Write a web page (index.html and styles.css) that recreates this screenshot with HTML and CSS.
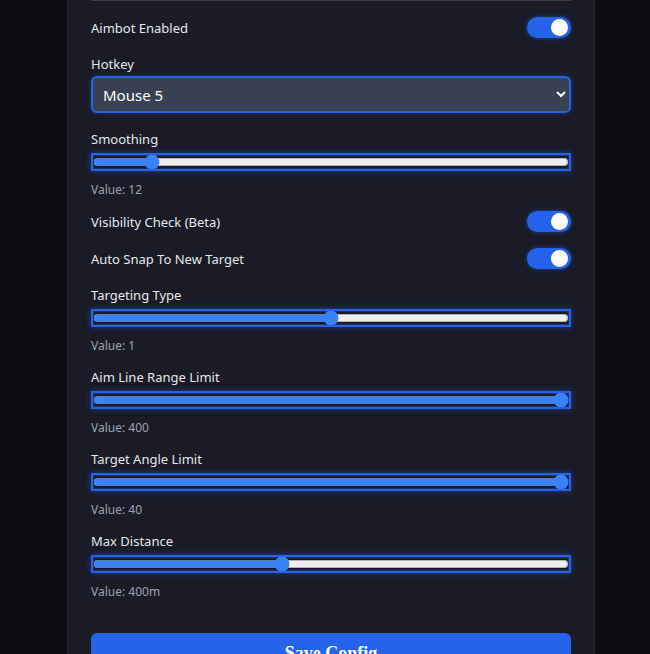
FILE: index.html
```html
<!DOCTYPE html>
<html lang="en">
<head>
    <meta charset="UTF-8">
    <meta name="viewport" content="width=device-width, initial-scale=1.0">
    <title>Aimbot Config</title>
    <link rel="stylesheet" href="styles.css">
</head>
<body>
    <div class="panel">
        <div class="panel-head">Aimbot Settings</div>

        <div class="setting toggle-row">
            <span class="label">Aimbot Enabled</span>
            <label class="switch"><input type="checkbox" checked><span class="knob"></span></label>
        </div>

        <div class="setting">
            <label class="label" for="hotkey">Hotkey</label>
            <select id="hotkey">
                <option>Mouse 4</option>
                <option selected>Mouse 5</option>
                <option>Left Alt</option>
                <option>Left Shift</option>
            </select>
        </div>

        <div class="setting slider">
            <label class="label" for="smoothing">Smoothing</label>
            <input type="range" id="smoothing" min="1" max="100" value="12">
            <div class="value">Value: 12</div>
        </div>

        <div class="setting toggle-row">
            <span class="label">Visibility Check (Beta)</span>
            <label class="switch"><input type="checkbox" checked><span class="knob"></span></label>
        </div>

        <div class="setting toggle-row">
            <span class="label">Auto Snap To New Target</span>
            <label class="switch"><input type="checkbox" checked><span class="knob"></span></label>
        </div>

        <div class="setting slider">
            <label class="label" for="targeting">Targeting Type</label>
            <input type="range" id="targeting" min="0" max="2" value="1">
            <div class="value">Value: 1</div>
        </div>

        <div class="setting slider">
            <label class="label" for="aimline">Aim Line Range Limit</label>
            <input type="range" id="aimline" min="0" max="400" value="400">
            <div class="value">Value: 400</div>
        </div>

        <div class="setting slider">
            <label class="label" for="angle">Target Angle Limit</label>
            <input type="range" id="angle" min="0" max="40" value="40">
            <div class="value">Value: 40</div>
        </div>

        <div class="setting slider">
            <label class="label" for="distance">Max Distance</label>
            <input type="range" id="distance" min="10" max="1000" value="400">
            <div class="value">Value: 400m</div>
        </div>

        <button class="save">Save Config</button>
    </div>
</body>
</html>
```

FILE: styles.css
```css
body {
    margin: 0;
    background-color: #0c0d13;
    color: #e5e7eb;
    font-family: "Noto Sans", sans-serif;
    font-size: 13px;
    overflow: hidden;
}
.panel {
    box-sizing: border-box;
    width: 528px;
    margin: -65px 0 0 67px;
    padding: 24px 23px 40px;
    background-color: #1a1b27;
    border: 1px solid #262834;
    min-height: 760px;
}
.panel-head {
    height: 40px;
    border-bottom: 1px solid #3a3c4a;
    margin-bottom: 16px;
    font-size: 18px;
    font-weight: bold;
}
.setting {
    margin-bottom: 16px;
}
.setting.slider {
    margin-bottom: 13px;
}
.label {
    display: block;
    line-height: 20px;
    margin-bottom: 2px;
}
.toggle-row {
    display: flex;
    justify-content: space-between;
    align-items: center;
    height: 21px;
}
.toggle-row .label {
    margin-bottom: 0;
}
.switch {
    position: relative;
    width: 44px;
    height: 21px;
}
.switch input {
    display: none;
}
.knob {
    position: absolute;
    inset: 0;
    background-color: #2563eb;
    border-radius: 11px;
    box-shadow: 0 0 4px rgba(37, 99, 235, 0.6);
}
.knob::after {
    content: "";
    position: absolute;
    top: 2px;
    right: 3px;
    width: 17px;
    height: 17px;
    border-radius: 50%;
    background-color: #fff;
}
select {
    box-sizing: border-box;
    width: 100%;
    height: 37px;
    padding: 0 6px;
    background-color: #374151;
    color: #fff;
    border: 2px solid #2563eb;
    border-radius: 6px;
    box-shadow: 0 0 5px rgba(37, 99, 235, 0.4);
    font-family: "Noto Sans", sans-serif;
    font-size: 15px;
}
input[type="range"] {
    display: block;
    box-sizing: border-box;
    width: calc(100% - 4px);
    height: 14px;
    margin: 6px 2px 2px;
    outline: 2px solid #2563eb;
    outline-offset: 0;
    background-color: #14151d;
    accent-color: #3b82f6;
    box-shadow: 0 0 6px 2px rgba(37, 99, 235, 0.5);
}
.value {
    margin-top: 13px;
    font-size: 12px;
    line-height: 16px;
    color: #9ca3af;
}
.save {
    display: block;
    width: 100%;
    margin-top: 33px;
    padding: 10px 0;
    background-color: #2563eb;
    color: #fff;
    border: none;
    border-radius: 6px;
    font-family: "Liberation Serif", serif;
    font-size: 18px;
    font-weight: bold;
    cursor: pointer;
}
.save:hover {
    background-color: #1d4ed8;
}
```
